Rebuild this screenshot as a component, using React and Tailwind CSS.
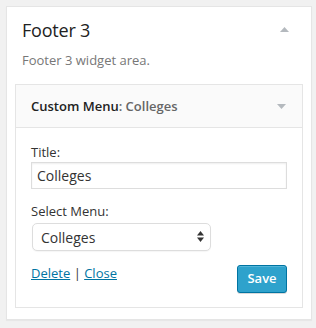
import React from 'react';

const font = { fontFamily: '"Open Sans", "Liberation Sans", sans-serif' };

const UpArrow = () => (
  <svg width="9" height="5" viewBox="0 0 9 5" className="fill-[#b4b9be]">
    <path d="M4.5 0 L9 5 L0 5 Z" />
  </svg>
);

const DownArrow = () => (
  <svg width="9" height="5" viewBox="0 0 9 5" className="fill-[#b4b9be]">
    <path d="M0 0 L9 0 L4.5 5 Z" />
  </svg>
);

const SelectArrows = () => (
  <svg width="7" height="11" viewBox="0 0 7 11" className="fill-[#333]">
    <path d="M3.5 0 L7 4.5 L0 4.5 Z" />
    <path d="M0 6.5 L7 6.5 L3.5 11 Z" />
  </svg>
);

export default function App() {
  return (
    <div className="h-[328px] w-[316px] bg-[#f1f1f1] pt-[6px] pl-[6px] text-[#222]" style={font}>
      <div className="w-[306px] border border-[#e5e5e5] bg-white shadow-[0_1px_1px_rgba(0,0,0,0.04)] pt-[11px] pb-[11px]">
        {/* Sidebar header */}
        <div className="flex items-start justify-between pl-[15px] pr-[22px]">
          <h2 className="text-[18px] leading-[24px] font-normal tracking-[-0.2px] text-[#222]">Footer 3</h2>
          <div className="pt-[9px]">
            <UpArrow />
          </div>
        </div>
        <p className="mt-[9px] px-[15px] text-[13px] leading-[18px] text-[#777]">Footer 3 widget area.</p>

        {/* Widget */}
        <div className="mx-[8px] mt-[15px] border border-[#e5e5e5] bg-white">
          <div className="flex h-[43px] items-center justify-between border-b border-[#e5e5e5] bg-[#fafafa] pl-[15px] pr-[16px]">
            <h3 className="text-[13px] leading-[18px] font-semibold text-[#222]">
              Custom Menu<span className="text-[#666]">: Colleges</span>
            </h3>
            <DownArrow />
          </div>

          <div className="px-[15px] pt-[15px] pb-[14px]">
            <label className="block text-[13px] leading-[18px] text-[#333]">Title:</label>
            <input
              type="text"
              defaultValue="Colleges"
              className="mt-[1px] block h-[27px] w-full border border-[#ddd] bg-white px-[5px] text-[14px] text-[#333] shadow-[inset_0_1px_2px_rgba(0,0,0,0.07)] outline-none"
              style={font}
            />

            <label className="mt-[13px] block text-[13px] leading-[18px] text-[#333]">Select Menu:</label>
            <div className="relative mt-[3px] ml-[1px] w-[179px]">
              <select
                defaultValue="Colleges"
                className="block h-[28px] w-full appearance-none rounded-[5px] border border-[#ddd] bg-white pl-[8px] text-[14px] text-[#333] shadow-[0_1px_1px_rgba(0,0,0,0.04)] outline-none"
                style={font}
              >
                <option>Colleges</option>
              </select>
              <div className="pointer-events-none absolute right-[7px] top-[8px]">
                <SelectArrows />
              </div>
            </div>

            <div className="mt-[13px] flex items-start justify-between">
              <div className="text-[13px] leading-[18px] text-[#333]">
                <a href="#" className="text-[#0074a2] underline">Delete</a>
                <span> | </span>
                <a href="#" className="text-[#0074a2] underline">Close</a>
              </div>
              <button
                className="mt-[1px] h-[28px] w-[50px] rounded-[3px] border border-[#0074a2] bg-[#2ea2cc] text-[13px] font-semibold text-white shadow-[inset_0_1px_0_rgba(120,200,230,0.5),0_1px_0_rgba(0,0,0,0.15)]"
                style={font}
              >
                Save
              </button>
            </div>
          </div>
        </div>
      </div>
    </div>
  );
}
